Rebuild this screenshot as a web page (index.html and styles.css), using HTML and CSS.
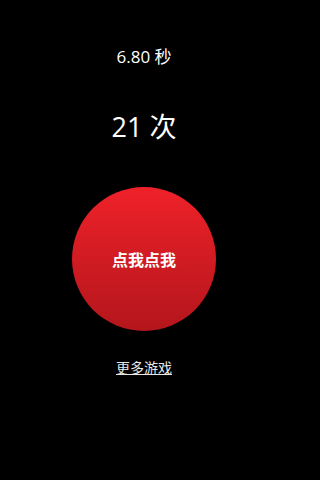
FILE: index.html
```html
<!DOCTYPE html>
<html lang="zh">
<head>
<meta charset="utf-8">
<link rel="stylesheet" href="styles.css">
</head>
<body>
<main class="screen">
  <div class="time">6.80 秒</div>
  <div class="count">21 次</div>
  <button class="tap">点我点我</button>
  <a class="more" href="#">更多游戏</a>
</main>
</body>
</html>
```
FILE: styles.css
```css
html, body {
  margin: 0;
  padding: 0;
  background: #000;
}
.screen {
  width: 288px;
  height: 480px;
  display: flex;
  flex-direction: column;
  align-items: center;
  font-family: "Open Sans", "Noto Sans CJK SC", sans-serif;
  color: #fff;
}
.time {
  margin-top: 47px;
  font-size: 17px;
  line-height: 20px;
}
.count {
  margin-top: 43px;
  font-size: 27px;
  line-height: 34px;
}
.tap {
  margin-top: 43px;
  width: 144px;
  height: 144px;
  border: none;
  border-radius: 50%;
  padding: 0;
  background: linear-gradient(to bottom, #ef2129, #b3161c);
  color: #fff;
  font-family: "Noto Sans CJK SC", sans-serif;
  font-size: 16px;
  font-weight: bold;
  line-height: 20px;
}
.more {
  margin-top: 27px;
  font-family: "Noto Sans CJK SC", sans-serif;
  font-size: 14px;
  line-height: 18px;
  color: #e8e8e8;
  text-decoration: underline;
}
```
